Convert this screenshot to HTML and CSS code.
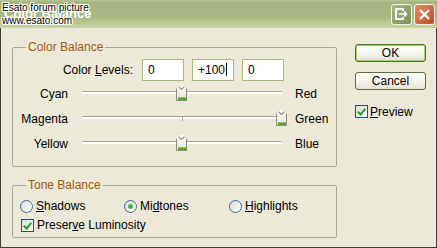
FILE: index.html
```html
<!DOCTYPE html>
<html lang="en">
<head>
    <meta charset="UTF-8">
    <title>Color Balance</title>
    <link rel="stylesheet" href="styles.css">
</head>
<body>
<div class="window">
    <div class="titlebar">
        <span class="title">Color Balance</span>
        <div class="caps">
            <span class="cap cap-help">
                <svg width="13" height="13" viewBox="0 0 13 13"><path d="M8 3V1H1V11H8V9" fill="none" stroke="#fff" stroke-width="2"/><path d="M4 6H11M9 3.5L11.5 6L9 8.5" fill="none" stroke="#fff" stroke-width="1.6"/></svg>
            </span>
            <span class="cap cap-close">
                <svg width="13" height="13" viewBox="0 0 13 13"><path d="M2 2L11 11M11 2L2 11" stroke="#fff" stroke-width="2.4"/></svg>
            </span>
        </div>
        <div class="watermark">Esato forum picture<br>www.esato.com</div>
    </div>
    <div class="client">
        <div class="main">
            <fieldset class="group balance">
                <legend>Color Balance</legend>
                <div class="levels">
                    <span class="levels-label">Color <u>L</u>evels:</span>
                    <div class="field">0</div>
                    <div class="field">+100<span class="caret"></span></div>
                    <div class="field">0</div>
                </div>
                <div class="slider">
                    <span class="lo">Cyan</span>
                    <div class="track"><span class="thumb" style="left:50%"></span></div>
                    <span class="hi">Red</span>
                </div>
                <div class="slider">
                    <span class="lo">Magenta</span>
                    <div class="track"><span class="thumb" style="left:100%"></span></div>
                    <span class="hi">Green</span>
                </div>
                <div class="slider">
                    <span class="lo">Yellow</span>
                    <div class="track"><span class="thumb" style="left:50%"></span></div>
                    <span class="hi">Blue</span>
                </div>
            </fieldset>
            <fieldset class="group tone">
                <legend>Tone Balance</legend>
                <div class="options">
                    <label class="opt"><span class="radio"></span><span><u>S</u>hadows</span></label>
                    <label class="opt"><span class="radio on"></span><span>Mi<u>d</u>tones</span></label>
                    <label class="opt"><span class="radio"></span><span><u>H</u>ighlights</span></label>
                </div>
                <label class="opt preserve"><span class="check"></span><span>Preser<u>v</u>e Luminosity</span></label>
            </fieldset>
        </div>
        <div class="side">
            <button class="btn btn-default">OK</button>
            <button class="btn btn-cancel">Cancel</button>
            <label class="opt preview"><span class="check"></span><span><u>P</u>review</span></label>
        </div>
    </div>
</div>
</body>
</html>
```

FILE: styles.css
```css
* {
    margin: 0;
    padding: 0;
    box-sizing: border-box;
}
html, body {
    width: 437px;
    height: 248px;
    overflow: hidden;
}
body {
    font: 12px/14px "Liberation Sans", Arial, sans-serif;
    color: #000;
    background: #ece9d8;
}

/* window frame */
.window {
    position: relative;
    width: 437px;
    height: 248px;
    display: flex;
    flex-direction: column;
}
.titlebar {
    flex: none;
    height: 28px;
    display: flex;
    align-items: center;
    justify-content: space-between;
    padding: 0 2px 0 4px;
    background: linear-gradient(#b9c697 0, #a6b480 2px, #a9b784 17px, #bcc893 23px, #cad4a4 28px);
}
.title {
    font: bold 13px/16px "Liberation Sans", Arial, sans-serif;
    color: #fff;
}
.caps {
    display: flex;
    gap: 2px;
}
.cap {
    width: 21px;
    height: 21px;
    border: 1px solid #f4f6ec;
    border-radius: 3px;
    display: flex;
    align-items: center;
    justify-content: center;
}
.cap-help {
    background: linear-gradient(135deg, #a9b688, #7d8d55);
}
.cap-close {
    background: linear-gradient(135deg, #e98a62, #c24b26);
}
.watermark {
    position: absolute;
    left: 2px;
    top: 1px;
    font: 10px/13px "Liberation Sans", Arial, sans-serif;
    color: #000;
    text-shadow: 1px 0 #fff, -1px 0 #fff, 0 1px #fff, 0 -1px #fff, 1px 1px #fff, -1px -1px #fff, 1px -1px #fff, -1px 1px #fff;
}
.client {
    flex: 1;
    display: flex;
    border: 1px solid #3d3d32;
    border-top: 0;
}

/* group boxes */
.main {
    width: 325px;
    margin-left: 11px;
}
.group {
    border: 1px solid #aca899;
    border-radius: 2px;
}
.group legend {
    margin-left: 13px;
    padding: 0 2px;
    line-height: 14px;
    color: #a5580c;
}
.balance {
    margin-top: 12px;
    height: 127px;
}
.tone {
    margin-top: 11px;
    height: 60px;
}

.levels {
    display: flex;
    align-items: center;
    height: 22px;
    margin-top: 5px;
}
.levels-label {
    width: 120px;
    margin-right: 9px;
    text-align: right;
}
.field {
    width: 42px;
    height: 22px;
    margin-right: 8px;
    padding-left: 5px;
    border: 1px solid #a5b97f;
    background: #fff;
    line-height: 20px;
}
.caret {
    display: inline-block;
    width: 1px;
    height: 13px;
    margin-left: 1px;
    background: #000;
    vertical-align: -2px;
}

/* sliders */
.slider {
    display: flex;
    align-items: center;
    height: 25px;
}
.lo {
    width: 55px;
    margin-right: 14px;
    text-align: right;
}
.hi {
    margin-left: 13px;
}
.track {
    position: relative;
    width: 200px;
    height: 25px;
}
.track::before {
    content: "";
    position: absolute;
    left: 0;
    right: 0;
    top: 10px;
    height: 2px;
    border-top: 1px solid #a3a194;
    background: #fff;
    border-radius: 1px;
}
.track::after {
    content: "";
    position: absolute;
    left: 100px;
    top: 11px;
    width: 1px;
    height: 4px;
    background: #a3a194;
}
.thumb {
    position: absolute;
    top: 3px;
    width: 11px;
    height: 17px;
    margin-left: -6px;
    z-index: 1;
    background:
        linear-gradient(#5ba12c, #5ba12c) 1px 14px / 9px 2px no-repeat,
        linear-gradient(#84c957, #84c957) 1px 13px / 9px 1px no-repeat,
        linear-gradient(#fdfdfb, #e6e5dc);
    border: 1px solid #8e8c7e;
    border-top: 0;
    clip-path: polygon(0 5px, 50% 0, 100% 5px, 100% 100%, 0 100%);
}
.thumb::before {
    content: "";
    position: absolute;
    left: -1px;
    top: 0;
    width: 11px;
    height: 6px;
    background:
        linear-gradient(to top right, transparent calc(50% - 1px), #8e8c7e 50%, transparent calc(50% + 1px)) 0 0 / 6px 6px no-repeat,
        linear-gradient(to top left, transparent calc(50% - 1px), #8e8c7e 50%, transparent calc(50% + 1px)) 5px 0 / 6px 6px no-repeat;
}

/* radios and checks */
.options {
    display: grid;
    grid-template-columns: 104px 105px auto;
    height: 16px;
    margin: 6px 0 0 7px;
    align-items: center;
}
.opt {
    display: flex;
    align-items: center;
    gap: 3px;
}
.preserve {
    height: 16px;
    margin: 3px 0 0 8px;
}
.radio {
    flex: none;
    width: 13px;
    height: 13px;
    border: 1px solid #3c6a9a;
    border-radius: 50%;
    background: linear-gradient(135deg, #dcdcd3, #fff);
}
.radio.on {
    background: radial-gradient(circle, #2f9e2f 0, #4cbf4c 2px, transparent 3px), linear-gradient(135deg, #dcdcd3, #fff);
}
.check {
    flex: none;
    width: 13px;
    height: 13px;
    border: 1px solid #1c5180;
    background:
        linear-gradient(to top right, transparent 40%, transparent 100%),
        linear-gradient(135deg, #dcdcd3, #fff);
    position: relative;
}
.check::after {
    content: "";
    position: absolute;
    left: 3px;
    top: 1px;
    width: 3px;
    height: 6px;
    border: solid #21a121;
    border-width: 0 2px 2px 0;
    transform: rotate(40deg);
}

/* side buttons */
.side {
    width: 71px;
    margin: 16px 0 0 18px;
    display: flex;
    flex-direction: column;
}
.btn {
    height: 18px;
    font: 12px/14px "Liberation Sans", Arial, sans-serif;
    color: #000;
    border-radius: 3px;
    background: linear-gradient(#fffffb, #f4f3ec 60%, #e3e0d2);
}
.btn-default {
    border: 1px solid #47741f;
    box-shadow: inset 0 0 0 1px #a8cc7c;
}
.btn-cancel {
    margin-top: 10px;
    border: 1px solid #5d6f3c;
}
.preview {
    margin-top: 15px;
    height: 13px;
    gap: 2px;
}
```
